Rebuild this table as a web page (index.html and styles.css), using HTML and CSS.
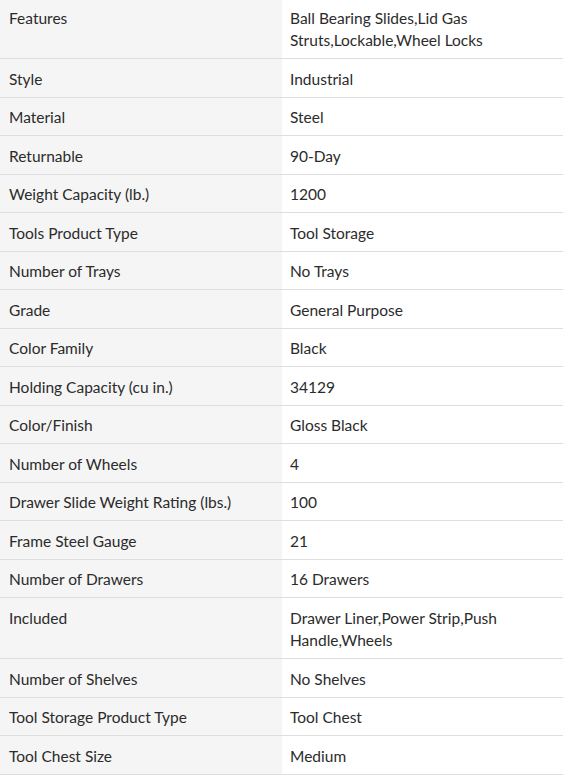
FILE: index.html
```html
<!DOCTYPE html>
<html lang="en">
<head>
<meta charset="utf-8">
<title>Specifications</title>
<link rel="stylesheet" href="styles.css">
</head>
<body>
<table class="specs">
  <colgroup><col class="col-name"><col class="col-value"></colgroup>
  <tbody>
    <tr><th>Features</th><td>Ball Bearing Slides,Lid Gas Struts,Lockable,Wheel Locks</td></tr>
    <tr><th>Style</th><td>Industrial</td></tr>
    <tr><th>Material</th><td>Steel</td></tr>
    <tr><th>Returnable</th><td>90-Day</td></tr>
    <tr><th>Weight Capacity (lb.)</th><td>1200</td></tr>
    <tr><th>Tools Product Type</th><td>Tool Storage</td></tr>
    <tr><th>Number of Trays</th><td>No Trays</td></tr>
    <tr><th>Grade</th><td>General Purpose</td></tr>
    <tr><th>Color Family</th><td>Black</td></tr>
    <tr><th>Holding Capacity (cu in.)</th><td>34129</td></tr>
    <tr><th>Color/Finish</th><td>Gloss Black</td></tr>
    <tr><th>Number of Wheels</th><td>4</td></tr>
    <tr><th>Drawer Slide Weight Rating (lbs.)</th><td>100</td></tr>
    <tr><th>Frame Steel Gauge</th><td>21</td></tr>
    <tr><th>Number of Drawers</th><td>16 Drawers</td></tr>
    <tr><th>Included</th><td>Drawer Liner,Power Strip,Push Handle,Wheels</td></tr>
    <tr><th>Number of Shelves</th><td>No Shelves</td></tr>
    <tr><th>Tool Storage Product Type</th><td>Tool Chest</td></tr>
    <tr><th>Tool Chest Size</th><td>Medium</td></tr>
  </tbody>
</table>
</body>
</html>
```
FILE: styles.css
```css
html, body {
  margin: 0;
  padding: 0;
  background: #ffffff;
}
body {
  font-family: Lato, "Noto Sans", sans-serif;
  font-size: 15.5px;
  color: #2b2b2b;
}
.specs {
  width: 563px;
  border-collapse: collapse;
  table-layout: fixed;
  margin-top: -1.6px;
}
.col-name { width: 282px; }
.col-value { width: 281px; }
.specs th,
.specs td {
  box-sizing: border-box;
  text-align: left;
  vertical-align: top;
  font-weight: 400;
  line-height: 22.4px;
  padding: 8.6px 8px 6.5px 8px;
  border-bottom: 1px solid #dedede;
}
.specs th {
  background: #f5f5f5;
  padding-left: 9px;
}
.specs td {
  background: #ffffff;
}
```
